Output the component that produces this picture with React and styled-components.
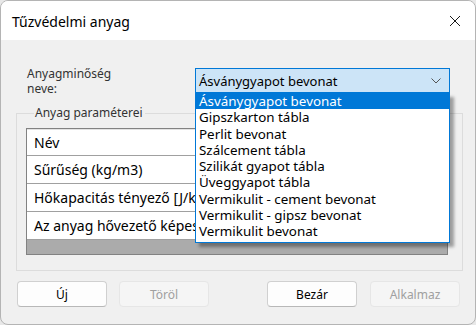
import React from 'react'
import styled, { createGlobalStyle } from 'styled-components'

const GlobalStyle = createGlobalStyle`
  html, body {
    margin: 0;
    padding: 0;
    background: #e8e8e8;
  }
  * {
    box-sizing: border-box;
  }
`

const Window = styled.div`
  width: 476px;
  height: 325px;
  display: flex;
  flex-direction: column;
  border: 1px solid #b4b4b4;
  border-radius: 8px;
  overflow: hidden;
  background: #f0f0f0;
  font-family: 'Noto Sans', 'Open Sans', sans-serif;
  color: #1a1a1a;
`

const TitleBar = styled.div`
  height: 39px;
  flex: none;
  display: flex;
  align-items: center;
  justify-content: space-between;
  padding: 0 14px 0 11px;
  background: #ffffff;
`

const Title = styled.span`
  font-size: 14px;
  color: #000;
  margin-top: 1px;
`

const CloseIcon = styled.svg`
  width: 12px;
  height: 12px;
`

const Body = styled.div`
  flex: 1;
  display: flex;
  flex-direction: column;
  padding: 27px 12px 0 15px;
`

const FieldRow = styled.div`
  display: flex;
  align-items: flex-start;
  padding-left: 11px;
  position: relative;
  z-index: 2;
`

const Label = styled.label`
  width: 168px;
  font-size: 12px;
  line-height: 14.5px;
  color: #333;
`

const ComboWrap = styled.div`
  position: relative;
  width: 255px;
  margin-top: 1px;
`

const Combo = styled.div`
  height: 25px;
  display: flex;
  align-items: center;
  justify-content: space-between;
  padding: 0 8px 0 3px;
  background: #cce4f7;
  border: 1px solid #0078d7;
  font-size: 13px;
  color: #000;
`

const DropList = styled.ul`
  position: absolute;
  top: 25px;
  left: 0;
  width: 255px;
  margin: 0;
  padding: 0 0 2px;
  list-style: none;
  background: #fff;
  border: 1px solid #0078d7;
  border-top: none;
  box-shadow: 4px 4px 3px rgba(0, 0, 0, 0.35);
`

const Option = styled.li`
  height: 16.3px;
  line-height: 16px;
  padding-left: 3px;
  font-size: 13.4px;
  white-space: nowrap;
  background: ${p => (p.selected ? '#0078d7' : 'transparent')};
  color: ${p => (p.selected ? '#fff' : '#000')};
`

const Group = styled.fieldset`
  margin: 10px 0 0;
  padding: 8px 14px 15px 9px;
  border: 1px solid #dcdcdc;
  min-width: 0;
`

const Legend = styled.legend`
  font-size: 12px;
  color: #333;
  padding: 0 2px 0 1px;
  margin-left: 8px;
  line-height: 14px;
`

const Grid = styled.div`
  border: 1px solid #828282;
  height: 127px;
  display: flex;
  flex-direction: column;
  background: #ababab;
  overflow: hidden;
`

const Row = styled.div`
  height: ${p => (p.header ? 27 : 28)}px;
  flex: none;
  display: flex;
  align-items: center;
  padding-left: 7px;
  background: #fff;
  border-top: ${p => (p.header ? '1px solid #e3e3e3' : 'none')};
  border-bottom: 1px solid #a0a0a0;
  font-size: 14px;
  color: #000;
  white-space: nowrap;
`

const ButtonBar = styled.div`
  display: flex;
  justify-content: space-between;
  margin-top: 10px;
  padding-right: 3px;
  padding-left: 1px;
`

const ButtonGroup = styled.div`
  display: flex;
  gap: ${p => p.gap}px;
`

const Button = styled.button`
  width: 90px;
  height: 26px;
  font-family: inherit;
  font-size: 12px;
  border-radius: 4px;
  border: 1px solid ${p => (p.disabled ? '#e6e6e6' : '#d0d0d0')};
  border-bottom-color: ${p => (p.disabled ? '#e6e6e6' : '#b8b8b8')};
  background: ${p => (p.disabled ? '#f5f5f5' : '#fdfdfd')};
  color: ${p => (p.disabled ? '#a0a0a0' : '#000')};
  padding: 0;
`

const options = [
  'Ásványgyapot bevonat',
  'Gipszkarton tábla',
  'Perlit bevonat',
  'Szálcement tábla',
  'Szilikát gyapot tábla',
  'Üveggyapot tábla',
  'Vermikulit - cement bevonat',
  'Vermikulit - gipsz bevonat',
  'Vermikulit bevonat',
]

const rows = ['Sűrűség (kg/m3)', 'Hőkapacitás tényező [J/kgK]', 'Az anyag hővezető képessége']

export default function App() {
  return (
    <>
      <GlobalStyle />
      <Window>
        <TitleBar>
          <Title>Tűzvédelmi anyag</Title>
          <CloseIcon viewBox="0 0 12 12">
            <path d="M1 1 L11 11 M11 1 L1 11" stroke="#1a1a1a" strokeWidth="1" fill="none" />
          </CloseIcon>
        </TitleBar>
        <Body>
          <FieldRow>
            <Label>
              Anyagminőség
              <br />
              neve:
            </Label>
            <ComboWrap>
              <Combo>
                <span>Ásványgyapot bevonat</span>
                <svg width="10" height="6" viewBox="0 0 10 6">
                  <polyline points="0.5,0.5 5,5 9.5,0.5" stroke="#555" strokeWidth="1" fill="none" />
                </svg>
              </Combo>
              <DropList>
                {options.map((o, i) => (
                  <Option key={o} selected={i === 0}>
                    {o}
                  </Option>
                ))}
              </DropList>
            </ComboWrap>
          </FieldRow>
          <Group>
            <Legend>Anyag paraméterei</Legend>
            <Grid>
              <Row header>Név</Row>
              {rows.map(r => (
                <Row key={r}>{r}</Row>
              ))}
            </Grid>
          </Group>
          <ButtonBar>
            <ButtonGroup gap={12}>
              <Button>Új</Button>
              <Button disabled>Töröl</Button>
            </ButtonGroup>
            <ButtonGroup gap={13}>
              <Button>Bezár</Button>
              <Button disabled>Alkalmaz</Button>
            </ButtonGroup>
          </ButtonBar>
        </Body>
      </Window>
    </>
  )
}
